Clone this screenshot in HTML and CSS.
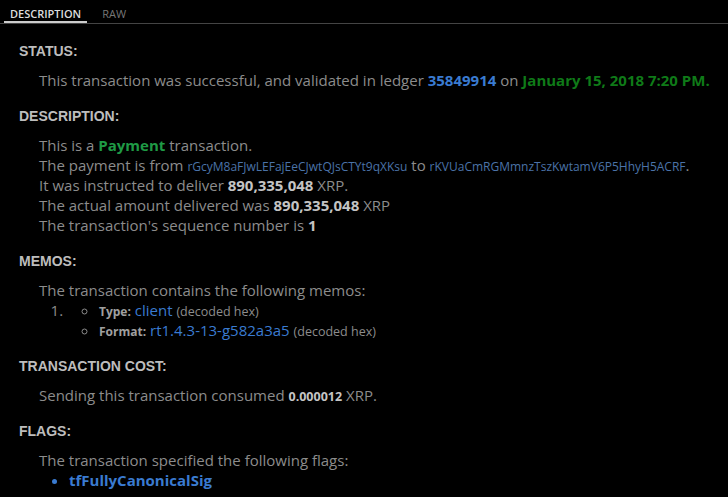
FILE: index.html
```html
<!DOCTYPE html>
<html>
<head>
<meta charset="utf-8">
<link rel="stylesheet" href="styles.css">
</head>
<body>
<div class="tabs">
  <div class="tab active">DESCRIPTION</div>
  <div class="tab">RAW</div>
</div>
<div class="content">
  <section class="sec">
    <h3>STATUS:</h3>
    <div class="body">This transaction was successful, and validated in ledger <b class="blue">35849914</b> on <b class="date">January 15, 2018 7:20 PM.</b></div>
  </section>
  <section class="sec">
    <h3>DESCRIPTION:</h3>
    <div class="body">
      <div>This is a <b class="green">Payment</b> transaction.</div>
      <div>The payment is from <span class="addr">rGcyM8aFJwLEFajEeCJwtQJsCTYt9qXKsu</span> to <span class="addr">rKVUaCmRGMmnzTszKwtamV6P5HhyH5ACRF</span>.</div>
      <div>It was instructed to deliver <b class="num">890,335,048</b> XRP.</div>
      <div>The actual amount delivered was <b class="num">890,335,048</b> XRP</div>
      <div>The transaction's sequence number is <b class="num">1</b></div>
    </div>
  </section>
  <section class="sec">
    <h3>MEMOS:</h3>
    <div class="body">
      <div>The transaction contains the following memos:</div>
      <ol class="memos">
        <li>
          <ul class="memo">
            <li><b class="label">Type:</b> <span class="blue">client</span> <span class="hint">(decoded hex)</span></li>
            <li><b class="label">Format:</b> <span class="blue">rt1.4.3-13-g582a3a5</span> <span class="hint">(decoded hex)</span></li>
          </ul>
        </li>
      </ol>
    </div>
  </section>
  <section class="sec">
    <h3>TRANSACTION COST:</h3>
    <div class="body">Sending this transaction consumed <b class="small-num">0.000012</b> XRP.</div>
  </section>
  <section class="sec">
    <h3>FLAGS:</h3>
    <div class="body">
      <div>The transaction specified the following flags:</div>
      <ul class="flags">
        <li><b class="blue">tfFullyCanonicalSig</b></li>
      </ul>
    </div>
  </section>
</div>
</body>
</html>
```

FILE: styles.css
```css
html, body {
  margin: 0;
  padding: 0;
  background: #000;
}
body {
  font-family: "Open Sans", "Liberation Sans", sans-serif;
  color: #8c8c8c;
  width: 728px;
  height: 497px;
  overflow: hidden;
}
.tabs {
  display: flex;
  gap: 9px;
  border-bottom: 1px solid #444;
  padding: 7px 0 0 4px;
  height: 16px;
}
.tab {
  font-size: 11px;
  color: #777;
  padding: 0 6px;
  line-height: 14px;
  font-weight: 400;
}
.tab.active {
  color: #ddd;
  font-weight: 600;
  border-bottom: 2px solid #ccc;
}
.content {
  padding: 19px 0 0 19px;
}
.sec {
  margin-bottom: 18px;
}
h3 {
  font-family: "Liberation Sans", Arial, sans-serif;
  font-weight: 700;
  font-size: 14px;
  color: #bdbdbd;
  margin: 0 0 11px 0;
  line-height: 16px;
}
.body {
  padding-left: 20px;
  font-size: 15px;
  line-height: 20px;
}
.body b, .body span { line-height: 1; }
b { font-weight: 700; }
.blue { color: #3a7bd1; }
.date { color: #0f7a18; }
.green { color: #1f9a45; }
.num { color: #c4c4c4; }
.small-num { color: #c4c4c4; font-size: 12.5px; }
.addr { font-size: 12px; color: #4b73a8; }
.memos {
  margin: 0;
  padding-left: 28px;
}
.memo {
  margin: 0;
  padding-left: 32px;
  list-style: circle;
}
.memo li { line-height: 20px; }
.label { font-size: 12px; color: #a0a0a0; }
.hint { font-size: 12.5px; }
.flags {
  margin: 0;
  padding-left: 30px;
  list-style: disc;
}
.flags li::marker { color: #3a7bd1; }
```
